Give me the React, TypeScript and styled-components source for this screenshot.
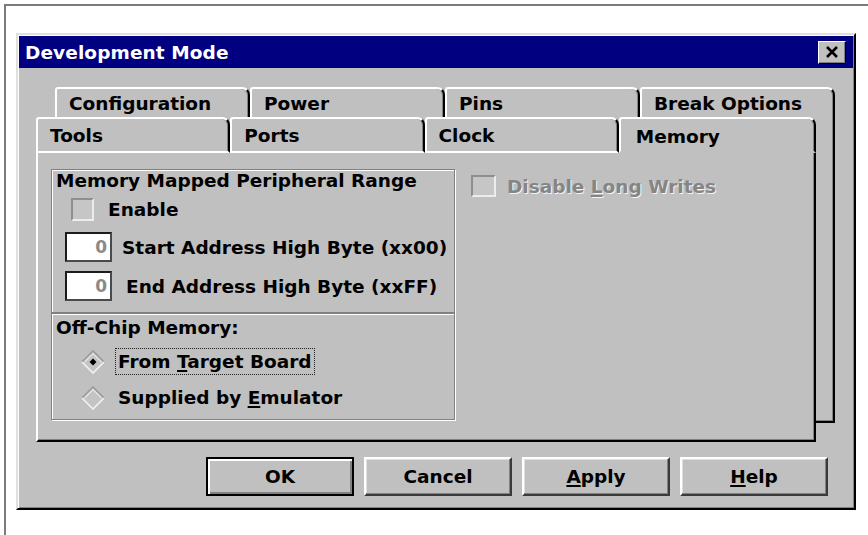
import React from "react";
import styled, { createGlobalStyle } from "styled-components";

const Global = createGlobalStyle`
  html, body { margin: 0; padding: 0; background: #ffffff; }
  body { font-family: "DejaVu Sans", "Liberation Sans", sans-serif; }
  * { box-sizing: border-box; }
`;

const FACE = "#c0c0c0";

const Frame = styled.div`
  margin: 4px 0 0 4px;
  height: 531px;
  border-top: 2px solid #7c7c7c;
  border-left: 2px solid #7c7c7c;
  padding: 27px 0 0 10px;
  overflow: hidden;
`;

const Dialog = styled.div`
  width: 840px;
  background: ${FACE};
  border: 2px solid;
  border-color: #dfdfdf #000 #000 #dfdfdf;
  box-shadow: inset 1px 1px 0 #fff, inset -1px -1px 0 #808080;
  padding: 1px 1px 12px 1px;
  font-weight: bold;
  font-size: 18.5px;
  color: #000;
`;

const TitleBar = styled.div`
  height: 32px;
  background: #000080;
  display: flex;
  align-items: center;
  justify-content: space-between;
  padding: 0 7px 0 6px;
`;

const TitleText = styled.span`
  color: #fff;
  font-weight: bold;
  font-size: 18.5px;
  letter-spacing: 0.1px;
`;

const CloseButton = styled.div`
  width: 28px;
  height: 23px;
  background: ${FACE};
  border: 1px solid;
  border-color: #fff #000 #000 #fff;
  box-shadow: inset -1px -1px 0 #808080;
  display: flex;
  align-items: center;
  justify-content: center;
`;

const Body = styled.div`
  padding: 19px 0 0 17px;
`;

const TabArea = styled.div`
  display: flex;
  flex-direction: column;
  width: 799px;
`;

const TabRow = styled.div<{ $offset?: number; $height: number }>`
  display: flex;
  width: 780px;
  height: ${(p) => p.$height}px;
  margin-left: ${(p) => p.$offset ?? 0}px;
`;

const Tab = styled.div<{ $selected?: boolean; $back?: boolean }>`
  flex: 1;
  display: flex;
  align-items: center;
  padding-left: ${(p) => (p.$selected ? 15 : 12)}px;
  padding-top: ${(p) => (p.$selected ? 2 : 0)}px;
  border-top: 2px solid #fff;
  border-left: 2px solid #fff;
  border-right: 2px solid #000;
  border-bottom: ${(p) =>
    p.$back ? "none" : p.$selected ? `2px solid ${FACE}` : "2px solid #fff"};
  border-top-left-radius: 3px;
  border-top-right-radius: 8px;
  box-shadow: inset -1px 0 0 #808080;
  white-space: nowrap;
`;

const FrontWrap = styled.div`
  display: flex;
  align-items: flex-start;
`;

const MainCol = styled.div`
  width: 780px;
  display: flex;
  flex-direction: column;
`;

const BackStrip = styled.div`
  width: 19px;
  height: 306px;
  border-right: 2px solid #000;
  border-bottom: 2px solid #000;
  box-shadow: inset -1px -1px 0 #808080;
`;

const Panel = styled.div`
  height: 289px;
  border-left: 2px solid #fff;
  border-right: 2px solid #000;
  border-bottom: 2px solid #000;
  box-shadow: inset -1px -1px 0 #808080;
  padding: 16px 0 0 13px;
  display: flex;
  gap: 16px;
`;

const LeftCol = styled.div`
  width: 404px;
  display: flex;
  flex-direction: column;
`;

const Group = styled.div<{ $height: number }>`
  height: ${(p) => p.$height}px;
  border: 1px solid #808080;
  box-shadow: inset 1px 1px 0 #fff, 1px 1px 0 #fff;
  display: flex;
  flex-direction: column;
`;

const GroupTitle = styled.div<{ $top: number }>`
  line-height: 20px;
  padding-left: 4px;
  margin-top: ${(p) => p.$top}px;
  white-space: nowrap;
`;

const Row = styled.div<{ $top: number; $left: number; $gap: number; $height: number }>`
  display: flex;
  align-items: center;
  height: ${(p) => p.$height}px;
  margin-top: ${(p) => p.$top}px;
  margin-left: ${(p) => p.$left}px;
  gap: ${(p) => p.$gap}px;
  white-space: nowrap;
`;

const CheckBox = styled.div<{ $w: number; $h: number }>`
  width: ${(p) => p.$w}px;
  height: ${(p) => p.$h}px;
  flex: none;
  background: #c6c6c6;
  border: 2px solid;
  border-color: #8e8e8e #ececec #ececec #8e8e8e;
`;

const NumberBox = styled.div`
  width: 47px;
  height: 30px;
  flex: none;
  background: #fff;
  border: 2px solid;
  border-color: #1c1c1c #4a4a4a #4a4a4a #1c1c1c;
  color: #8a8a8a;
  display: flex;
  align-items: center;
  justify-content: flex-end;
  padding-right: 3px;
  font-size: 17px;
`;

const FocusLabel = styled.span<{ $focused?: boolean }>`
  padding: 2px 2px;
  border: 1px dotted ${(p) => (p.$focused ? "#222" : "transparent")};
  line-height: 21px;
`;

const Mnemonic = styled.span`
  text-decoration: underline;
  text-underline-offset: 2px;
  text-decoration-thickness: 2px;
`;

const DisabledLabel = styled.span`
  color: #858585;
  text-shadow: 1px 1px 0 #f4f4f4;
`;

const RightCol = styled.div`
  display: flex;
  flex-direction: column;
`;

const ButtonRow = styled.div`
  display: flex;
  justify-content: flex-end;
  gap: 10px;
  margin-top: 15px;
  padding-right: 25px;
`;

const Button = styled.div<{ $default?: boolean }>`
  width: 148px;
  height: 39px;
  display: flex;
  align-items: center;
  justify-content: center;
  background: ${FACE};
  border: 2px solid;
  border-color: ${(p) => (p.$default ? "#000" : "#fff #3a3a3a #3a3a3a #fff")};
  box-shadow: ${(p) =>
    p.$default
      ? "inset 2px 2px 0 #fff, inset -2px -2px 0 #808080"
      : "inset -1px -1px 0 #808080, inset 1px 1px 0 #dfdfdf"};
`;

const XIcon = () => (
  <svg width="14" height="12" viewBox="0 0 14 12">
    <path d="M2 1 L12 11 M12 1 L2 11" stroke="#000" strokeWidth="2.6" />
  </svg>
);

const Diamond = ({ checked }: { checked?: boolean }) => (
  <svg width="24" height="24" viewBox="0 0 24 24" style={{ flex: "none" }}>
    <polygon points="12,1 23,12 12,23 1,12" fill="#c4c4c4" />
    <path d="M1 12 L12 1 L23 12" fill="none" stroke="#9a9a9a" strokeWidth="1.6" />
    <path d="M1 12 L12 23 L23 12" fill="none" stroke="#f2f2f2" strokeWidth="1.6" />
    <path d="M3.5 12 L12 3.5 L20.5 12" fill="none" stroke="#e6e6e6" strokeWidth="1.2" />
    {checked && <polygon points="12,8.5 15.5,12 12,15.5 8.5,12" fill="#000" />}
  </svg>
);

const backTabs = ["Configuration", "Power", "Pins", "Break Options"];
const frontTabs = ["Tools", "Ports", "Clock", "Memory"];

export default function App() {
  return (
    <>
      <Global />
      <Frame>
        <Dialog>
          <TitleBar>
            <TitleText>Development Mode</TitleText>
            <CloseButton>
              <XIcon />
            </CloseButton>
          </TitleBar>
          <Body>
            <TabArea>
              <TabRow $offset={19} $height={30}>
                {backTabs.map((t) => (
                  <Tab key={t} $back>
                    {t}
                  </Tab>
                ))}
              </TabRow>
              <FrontWrap>
                <MainCol>
                  <TabRow $height={36}>
                    {frontTabs.map((t) => (
                      <Tab key={t} $selected={t === "Memory"}>
                        {t}
                      </Tab>
                    ))}
                  </TabRow>
                  <Panel>
                    <LeftCol>
                      <Group $height={144}>
                        <GroupTitle $top={1}>Memory Mapped Peripheral Range</GroupTitle>
                        <Row $top={6} $left={19} $gap={14} $height={24}>
                          <CheckBox $w={23} $h={23} />
                          <span>Enable</span>
                        </Row>
                        <Row $top={11} $left={13} $gap={10} $height={30}>
                          <NumberBox>0</NumberBox>
                          <span>Start Address High Byte (xx00)</span>
                        </Row>
                        <Row $top={9} $left={13} $gap={14} $height={30}>
                          <NumberBox>0</NumberBox>
                          <span>End Address High Byte (xxFF)</span>
                        </Row>
                      </Group>
                      <Group $height={107}>
                        <GroupTitle $top={4}>Off-Chip Memory:</GroupTitle>
                        <Row $top={10} $left={29} $gap={10} $height={27}>
                          <Diamond checked />
                          <FocusLabel $focused>
                            From <Mnemonic>T</Mnemonic>arget Board
                          </FocusLabel>
                        </Row>
                        <Row $top={9} $left={29} $gap={10} $height={27}>
                          <Diamond />
                          <FocusLabel>
                            Supplied by <Mnemonic>E</Mnemonic>mulator
                          </FocusLabel>
                        </Row>
                      </Group>
                    </LeftCol>
                    <RightCol>
                      <Row $top={6} $left={0} $gap={11} $height={22}>
                        <CheckBox $w={25} $h={22} />
                        <DisabledLabel>
                          Disable <Mnemonic>L</Mnemonic>ong Writes
                        </DisabledLabel>
                      </Row>
                    </RightCol>
                  </Panel>
                </MainCol>
                <BackStrip />
              </FrontWrap>
            </TabArea>
            <ButtonRow>
              <Button $default>OK</Button>
              <Button>Cancel</Button>
              <Button>
                <span>
                  <Mnemonic>A</Mnemonic>pply
                </span>
              </Button>
              <Button>
                <span>
                  <Mnemonic>H</Mnemonic>elp
                </span>
              </Button>
            </ButtonRow>
          </Body>
        </Dialog>
      </Frame>
    </>
  );
}
